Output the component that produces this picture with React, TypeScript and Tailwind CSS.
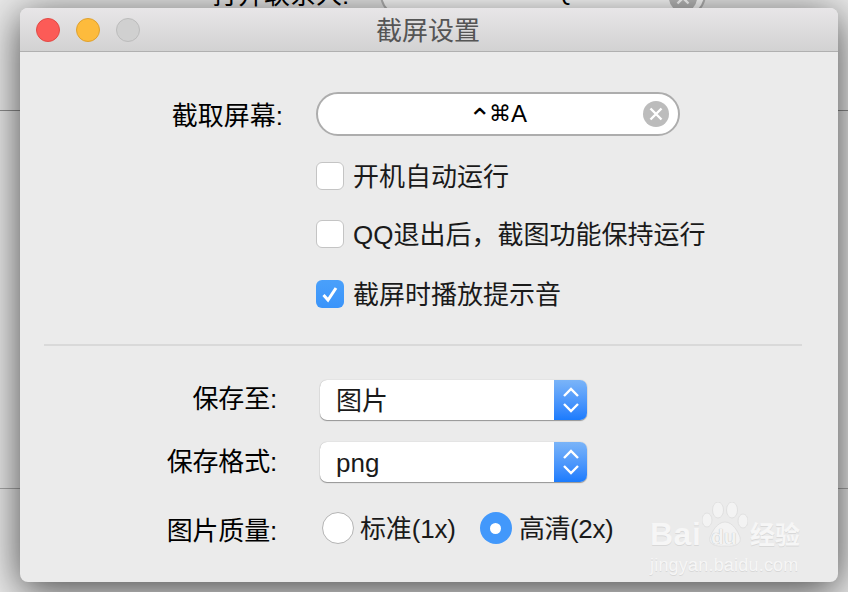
import React from "react";

const font = { fontFamily: '"Liberation Sans","Noto Sans CJK SC",sans-serif' };

function Check({ on, label }: { on?: boolean; label: string }) {
  return (
    <div className="flex items-center h-[28px] gap-[9px]">
      {on ? (
        <div className="w-[28px] h-[28px] rounded-[6px] bg-gradient-to-b from-[#4aa0fb] to-[#3a94fa] flex items-center justify-center">
          <svg width="20" height="20" viewBox="0 0 20 20" fill="none">
            <path d="M3.5 11 L8 16 L16 4" stroke="#fff" strokeWidth="3" />
          </svg>
        </div>
      ) : (
        <div className="w-[28px] h-[28px] rounded-[6px] bg-white border border-[#c4c4c4]" />
      )}
      <span className="text-[26px] leading-none text-[#1a1a1a] mt-[2px]">{label}</span>
    </div>
  );
}

function Select({ value }: { value: string }) {
  return (
    <div className="flex w-[267px] h-[40px] rounded-[7px] overflow-hidden bg-white shadow-[0_1px_1px_rgba(0,0,0,0.35),0_0_1px_rgba(0,0,0,0.3)]">
      <div className="flex-1 pl-[16px] pt-[2px] flex items-center text-[26px] leading-none text-[#1a1a1a]">{value}</div>
      <div className="w-[33px] bg-gradient-to-b from-[#7ab4f8] to-[#1a7bfd] flex items-center justify-center">
        <svg width="18" height="30" viewBox="0 0 18 30" fill="none">
          <path d="M2 11 L9 4 L16 11 M2 19 L9 26 L16 19" stroke="#fff" strokeWidth="2.4" />
        </svg>
      </div>
    </div>
  );
}

function Paw() {
  return (
    <svg width="46" height="46" viewBox="0 0 46 46" fill="#f3f3f3" stroke="#dcdcdc" strokeWidth="0.8">
      <ellipse cx="5" cy="18" rx="5" ry="7" />
      <ellipse cx="16" cy="8" rx="5.5" ry="8" />
      <ellipse cx="30" cy="8" rx="5.5" ry="8" />
      <ellipse cx="41" cy="19" rx="5" ry="7" />
      <path d="M23 20 C31 20 36 30 38 35 C40 42 33 45 23 44 C13 45 6 42 8 35 C10 30 15 20 23 20 Z" />
    </svg>
  );
}

export default function App() {
  return (
    <div style={font} className="relative w-[848px] h-[592px] overflow-hidden bg-[#e9e9e9]">
      {/* window behind */}
      <div className="absolute inset-x-0 top-[110px] h-px bg-[#8e8e8e]" />
      <div className="absolute inset-x-0 top-[488px] h-px bg-[#a8a8a8]" />
      <div className="absolute left-[212px] top-[-21px] text-[26px] leading-[32px] text-black">打开联系人:</div>
      <div className="absolute left-[380px] top-[-30px] w-[326px] h-[48px] rounded-full bg-white border-2 border-[#b4b4b4]">
        <span className="absolute left-[152px] top-[8px] text-[24px] leading-[24px] whitespace-nowrap"><span className="font-['DejaVu_Sans'] text-[20px]">⌘</span>Q</span>
        <span className="absolute right-[7px] top-[12px] w-[28px] h-[28px] rounded-full bg-[#bcbcbc] flex items-center justify-center">
          <svg width="14" height="14" viewBox="0 0 14 14"><path d="M1.5 1.5 L12.5 12.5 M12.5 1.5 L1.5 12.5" stroke="#fff" strokeWidth="2.4" /></svg>
        </span>
      </div>

      {/* main window */}
      <div className="absolute left-[20px] top-[8px] w-[818px] h-[574px] rounded-[8px] overflow-hidden bg-[#ebebeb] shadow-[0_8px_40px_rgba(0,0,0,0.7)] flex flex-col">
        <div className="relative h-[44px] shrink-0 bg-gradient-to-b from-[#e8e6e8] to-[#d2d2d2] border-b border-[#b0b0b0] flex items-center justify-center">
          <div className="absolute left-[16px] top-[10px] flex gap-[16px]">
            <div className="w-[24px] h-[24px] rounded-full bg-[#fc5b57] border border-[#e24a45]" />
            <div className="w-[24px] h-[24px] rounded-full bg-[#fdbb3c] border border-[#dfa12f]" />
            <div className="w-[24px] h-[24px] rounded-full bg-[#d0d0d0] border border-[#bcbcbc]" />
          </div>
          <span className="text-[26px] leading-none text-[#555] mt-[2px] -ml-[2px]">截屏设置</span>
        </div>

        <div className="flex-1 flex flex-col">
          <div className="flex items-center pt-[40px]">
            <div className="w-[263px] text-right text-[26px] leading-none text-black mt-[3px]">截取屏幕:</div>
            <div className="ml-[33px] w-[364px] h-[44px] rounded-full bg-white border-2 border-[#adadad] flex items-center text-[24px] leading-none text-black relative">
              <span className="ml-[150px] whitespace-nowrap flex items-center">
                <span className="font-['DejaVu_Sans'] text-[28px] leading-[24px] w-[21px] mt-[9px]">⌃</span>
                <span className="font-['DejaVu_Sans'] text-[22px] leading-[24px]">⌘</span>
                <span>A</span>
              </span>
              <div className="absolute right-[9px] top-[7px] w-[26px] h-[26px] rounded-full bg-[#bcbcbc] flex items-center justify-center">
                <svg width="14" height="14" viewBox="0 0 14 14"><path d="M1.5 1.5 L12.5 12.5 M12.5 1.5 L1.5 12.5" stroke="#fff" strokeWidth="2.4" /></svg>
              </div>
            </div>
          </div>

          <div className="flex flex-col ml-[296px] mt-[26px]">
            <Check label="开机自动运行" />
            <div className="mt-[30px]"><Check label="QQ退出后，截图功能保持运行" /></div>
            <div className="mt-[32px]"><Check on label="截屏时播放提示音" /></div>
          </div>

          <div className="ml-[24px] mr-[36px] mt-[36px] h-[2px] bg-[#d9d9d9]" />

          <div className="flex items-center mt-[34px]">
            <div className="w-[257px] text-right text-[26px] leading-none text-black -mt-[2px] tracking-[-0.2px]">保存至:</div>
            <div className="ml-[43px]"><Select value="图片" /></div>
          </div>
          <div className="flex items-center mt-[22px]">
            <div className="w-[257px] text-right text-[26px] leading-none text-black tracking-[-0.2px]">保存格式:</div>
            <div className="ml-[43px]"><Select value="png" /></div>
          </div>
          <div className="flex items-center mt-[30px]">
            <div className="w-[257px] text-right text-[26px] leading-none text-black mt-[6px] tracking-[-0.2px]">图片质量:</div>
            <div className="ml-[45px] flex items-center">
              <div className="w-[32px] h-[32px] rounded-full bg-white border border-[#b4b4b4]" />
              <span className="ml-[6px] text-[26px] leading-none text-[#1a1a1a] mt-[2px] tracking-[-0.15px]">标准(1x)</span>
              <div className="ml-[24px] w-[32px] h-[32px] rounded-full bg-[#4298fb] flex items-center justify-center">
                <div className="w-[11px] h-[11px] rounded-full bg-white" />
              </div>
              <span className="ml-[7px] text-[26px] leading-none text-[#1a1a1a] mt-[2px] tracking-[-0.4px]">高清(2x)</span>
            </div>
          </div>
        </div>
      </div>

      {/* watermark */}
      <div className="absolute left-[650px] top-[502px] w-[180px] text-[#f6f6f6] [text-shadow:0_1px_0_#d8d8d8]">
        <div className="flex items-end h-[46px]">
          <span className="text-[32px] leading-[28px] font-bold w-[52px] tracking-[0.5px]">Bai</span>
          <span className="relative w-[46px] h-[46px]">
            <span className="absolute left-0 top-0"><Paw /></span>
            <span className="absolute left-[9px] top-[24px] text-[21px] leading-none font-bold text-[#f3f3f3] [text-shadow:0_0_1px_#aaa]">du</span>
          </span>
          <span className="ml-[2px] text-[25px] leading-[26px] font-bold whitespace-nowrap">经验</span>
        </div>
        <div className="text-[18px] leading-none mt-[8px] whitespace-nowrap tracking-[0.2px]">jingyan.baidu.com</div>
      </div>
    </div>
  );
}
